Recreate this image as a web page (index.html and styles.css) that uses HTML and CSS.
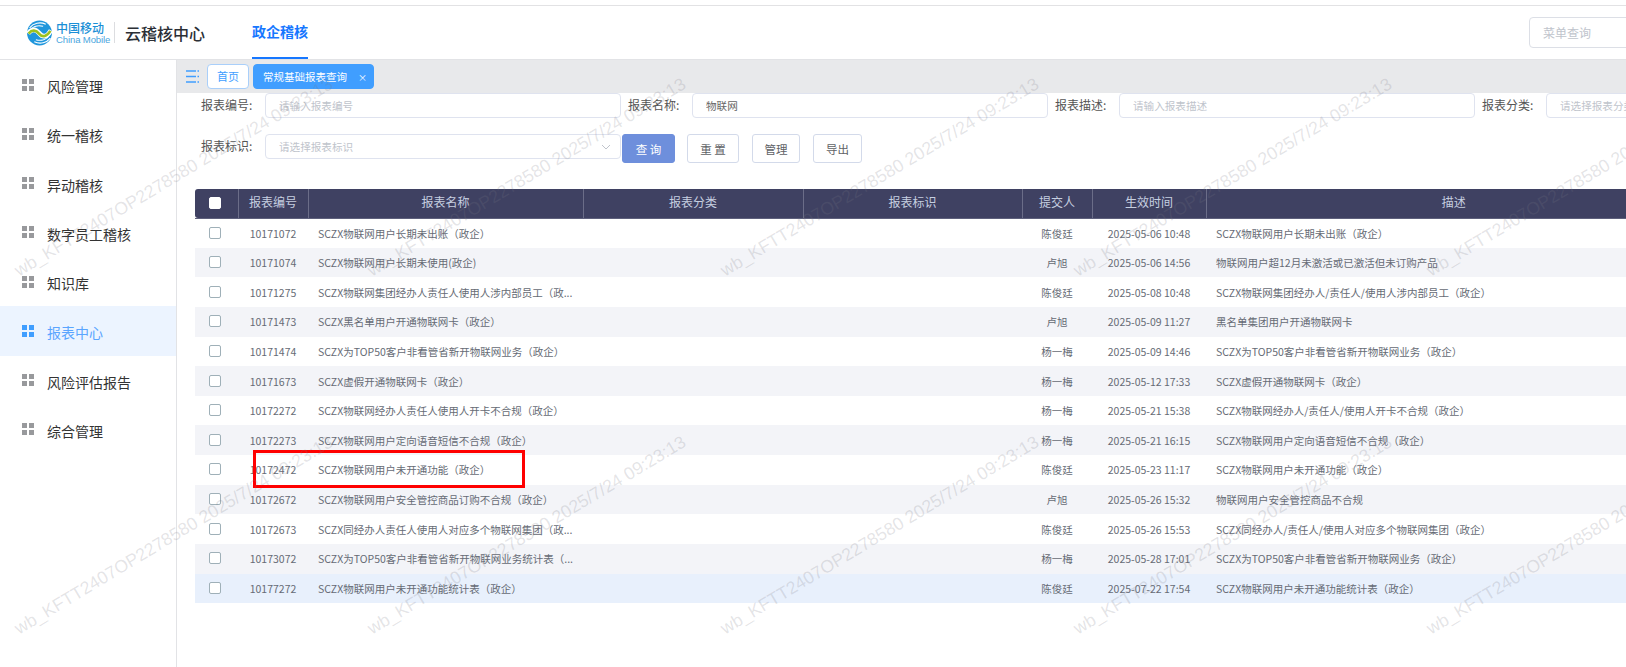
FILE: index.html
```html
<!DOCTYPE html>
<html lang="zh-CN">

<head>
    <meta charset="UTF-8">
    <title>云稽核中心</title>
    <link rel="stylesheet" href="styles.css">
</head>

<body>

    <div class="topline"></div>

    <header class="header">
        <div class="logo">
            <svg class="logo-mark" viewBox="0 0 48 50">
                <circle cx="24" cy="25" r="24" fill="#1e96dc" />
                <path d="M5 15C12 6 25 3 36 8M3 23C9 13 20 9 31 12M45 35C38 44 25 47 14 42M45 27C39 37 28 41 17 38" fill="none" stroke="#fff" stroke-width="2.200" />
                <path d="M2 26C9 16 17 17 24 26C30 34 38 33 46 20" fill="none" stroke="#fff" stroke-width="9" />
                <path d="M3 26C10 18 17 19 24 27C30 34 38 32 45 21" fill="none" stroke="#9cc21f" stroke-width="5" />
            </svg>
            <div class="logo-text">
                <div class="logo-cn">中国移动</div>
                <div class="logo-en">China Mobile</div>
            </div>
        </div>
        <div class="app-name">云稽核中心</div>
        <a class="nav-item">政企稽核</a>
        <input class="menu-search" type="text" placeholder="菜单查询">
    </header>

    <div class="layout">
        <aside class="sidebar">
            <div class="menu-item"><i class="grid-icon"><b></b><b></b><b></b><b></b></i><span>风险管理</span></div>
            <div class="menu-item"><i class="grid-icon"><b></b><b></b><b></b><b></b></i><span>统一稽核</span></div>
            <div class="menu-item"><i class="grid-icon"><b></b><b></b><b></b><b></b></i><span>异动稽核</span></div>
            <div class="menu-item"><i class="grid-icon"><b></b><b></b><b></b><b></b></i><span>数字员工稽核</span></div>
            <div class="menu-item"><i class="grid-icon"><b></b><b></b><b></b><b></b></i><span>知识库</span></div>
            <div class="menu-item active"><i class="grid-icon"><b></b><b></b><b></b><b></b></i><span>报表中心</span></div>
            <div class="menu-item"><i class="grid-icon"><b></b><b></b><b></b><b></b></i><span>风险评估报告</span></div>
            <div class="menu-item"><i class="grid-icon"><b></b><b></b><b></b><b></b></i><span>综合管理</span></div>
        </aside>

        <main class="main">
            <div class="tabs">
                <svg class="tabs-toggle" viewBox="0 0 13 13">
                    <path d="M0 1H10M0 6.500H10M0 12H10M11.500 1H13M11.500 6.500H13M11.500 12H13" fill="none" stroke="#409eff" stroke-width="1.300" />
                </svg>
                <div class="tab">首页</div>
                <div class="tab current">常规基础报表查询<span class="tab-close">×</span></div>
            </div>

            <div class="filters">
                <div class="filter-row">
                    <label class="field"><span>报表编号:</span><input type="text" placeholder="请输入报表编号"></label>
                    <label class="field"><span>报表名称:</span><input type="text" value="物联网"></label>
                    <label class="field"><span>报表描述:</span><input type="text" placeholder="请输入报表描述"></label>
                    <label class="field"><span>报表分类:</span><input type="text" placeholder="请选择报表分类"></label>
                </div>
                <div class="filter-row second">
                    <label class="field select">
                        <span>报表标识:</span><input type="text" placeholder="请选择报表标识">
                        <svg class="chevron" viewBox="0 0 10 6">
                            <path d="M1 1L5 5L9 1" fill="none" stroke="#c0c4cc" />
                        </svg>
                    </label>
                    <button class="btn primary">查 询</button>
                    <button class="btn reset">重 置</button>
                    <button class="btn manage">管理</button>
                    <button class="btn export">导出</button>
                </div>
            </div>

            <table class="report-table">
                <colgroup>
                    <col class="c-check">
                    <col class="c-id">
                    <col class="c-name">
                    <col class="c-type">
                    <col class="c-tag">
                    <col class="c-user">
                    <col class="c-time">
                    <col class="c-desc">
                </colgroup>
                <thead>
                    <tr>
                        <th class="check"><input type="checkbox"></th>
                        <th>报表编号</th>
                        <th>报表名称</th>
                        <th>报表分类</th>
                        <th>报表标识</th>
                        <th>提交人</th>
                        <th>生效时间</th>
                        <th>描述</th>
                    </tr>
                </thead>
                <tbody>
                    <tr><td class="check"><input type="checkbox"></td><td class="center">10171072</td><td class="name">SCZX物联网用户长期未出账（政企）</td><td></td><td></td><td class="center">陈俊廷</td><td class="center">2025-05-06 10:48</td><td class="desc">SCZX物联网用户长期未出账（政企）</td></tr>
                    <tr><td class="check"><input type="checkbox"></td><td class="center">10171074</td><td class="name">SCZX物联网用户长期未使用(政企)</td><td></td><td></td><td class="center">卢旭</td><td class="center">2025-05-06 14:56</td><td class="desc">物联网用户超12月未激活或已激活但未订购产品</td></tr>
                    <tr><td class="check"><input type="checkbox"></td><td class="center">10171275</td><td class="name">SCZX物联网集团经办人责任人使用人涉内部员工（政...</td><td></td><td></td><td class="center">陈俊廷</td><td class="center">2025-05-08 10:48</td><td class="desc">SCZX物联网集团经办人/责任人/使用人涉内部员工（政企）</td></tr>
                    <tr><td class="check"><input type="checkbox"></td><td class="center">10171473</td><td class="name">SCZX黑名单用户开通物联网卡（政企）</td><td></td><td></td><td class="center">卢旭</td><td class="center">2025-05-09 11:27</td><td class="desc">黑名单集团用户开通物联网卡</td></tr>
                    <tr><td class="check"><input type="checkbox"></td><td class="center">10171474</td><td class="name">SCZX为TOP50客户非看管省新开物联网业务（政企）</td><td></td><td></td><td class="center">杨一梅</td><td class="center">2025-05-09 14:46</td><td class="desc">SCZX为TOP50客户非看管省新开物联网业务（政企）</td></tr>
                    <tr><td class="check"><input type="checkbox"></td><td class="center">10171673</td><td class="name">SCZX虚假开通物联网卡（政企）</td><td></td><td></td><td class="center">杨一梅</td><td class="center">2025-05-12 17:33</td><td class="desc">SCZX虚假开通物联网卡（政企）</td></tr>
                    <tr><td class="check"><input type="checkbox"></td><td class="center">10172272</td><td class="name">SCZX物联网经办人责任人使用人开卡不合规（政企）</td><td></td><td></td><td class="center">杨一梅</td><td class="center">2025-05-21 15:38</td><td class="desc">SCZX物联网经办人/责任人/使用人开卡不合规（政企）</td></tr>
                    <tr><td class="check"><input type="checkbox"></td><td class="center">10172273</td><td class="name">SCZX物联网用户定向语音短信不合规（政企）</td><td></td><td></td><td class="center">杨一梅</td><td class="center">2025-05-21 16:15</td><td class="desc">SCZX物联网用户定向语音短信不合规（政企）</td></tr>
                    <tr><td class="check"><input type="checkbox"></td><td class="center">10172472</td><td class="name">SCZX物联网用户未开通功能（政企）</td><td></td><td></td><td class="center">陈俊廷</td><td class="center">2025-05-23 11:17</td><td class="desc">SCZX物联网用户未开通功能（政企）</td></tr>
                    <tr><td class="check"><input type="checkbox"></td><td class="center">10172672</td><td class="name">SCZX物联网用户安全管控商品订购不合规（政企）</td><td></td><td></td><td class="center">卢旭</td><td class="center">2025-05-26 15:32</td><td class="desc">物联网用户安全管控商品不合规</td></tr>
                    <tr><td class="check"><input type="checkbox"></td><td class="center">10172673</td><td class="name">SCZX同经办人责任人使用人对应多个物联网集团（政...</td><td></td><td></td><td class="center">陈俊廷</td><td class="center">2025-05-26 15:53</td><td class="desc">SCZX同经办人/责任人/使用人对应多个物联网集团（政企）</td></tr>
                    <tr><td class="check"><input type="checkbox"></td><td class="center">10173072</td><td class="name">SCZX为TOP50客户非看管省新开物联网业务统计表（...</td><td></td><td></td><td class="center">杨一梅</td><td class="center">2025-05-28 17:01</td><td class="desc">SCZX为TOP50客户非看管省新开物联网业务（政企）</td></tr>
                    <tr class="hover"><td class="check"><input type="checkbox"></td><td class="center">10177272</td><td class="name">SCZX物联网用户未开通功能统计表（政企）</td><td></td><td></td><td class="center">陈俊廷</td><td class="center">2025-07-22 17:54</td><td class="desc">SCZX物联网用户未开通功能统计表（政企）</td></tr>
                </tbody>
            </table>
        </main>
    </div>

    <div class="red-box"></div>

    <div class="watermark">
        <span>wb_KFTT2407OP2278580 2025/7/24 09:23:13</span>
        <span>wb_KFTT2407OP2278580 2025/7/24 09:23:13</span>
        <span>wb_KFTT2407OP2278580 2025/7/24 09:23:13</span>
        <span>wb_KFTT2407OP2278580 2025/7/24 09:23:13</span>
        <span>wb_KFTT2407OP2278580 2025/7/24 09:23:13</span>
        <span>wb_KFTT2407OP2278580 2025/7/24 09:23:13</span>
        <span>wb_KFTT2407OP2278580 2025/7/24 09:23:13</span>
        <span>wb_KFTT2407OP2278580 2025/7/24 09:23:13</span>
        <span>wb_KFTT2407OP2278580 2025/7/24 09:23:13</span>
        <span>wb_KFTT2407OP2278580 2025/7/24 09:23:13</span>
    </div>

</body>

</html>
```

FILE: styles.css
```css
* {
    box-sizing: border-box;
}

html,
body {
    height: 100%;
}

body {
    position: relative;
    margin: 0;
    overflow: hidden;
    background: #fff;
    color: #606266;
    font-family: "Noto Sans CJK SC", "Liberation Sans", sans-serif;
}

.topline {
    height: 6px;
    border-bottom: 1px solid #e2e2e4;
}

.header {
    display: flex;
    align-items: center;
    height: 54px;
    padding-left: 27px;
    border-bottom: 1px solid #e2e3e6;
}

.logo {
    display: flex;
    align-items: center;
    width: 88px;
    height: 21px;
    border-right: 1px solid #dcdde0;
}

.logo-mark {
    flex: none;
    width: 25px;
    height: 26px;
    margin-right: 4px;
}

.logo-text {
    color: #1b8fd6;
    white-space: nowrap;
}

.logo-cn {
    font-size: 12px;
    font-weight: 500;
    line-height: 13px;
}

.logo-en {
    color: #4aa6de;
    font-family: "Liberation Sans", sans-serif;
    font-size: 9.500px;
    line-height: 11px;
    letter-spacing: -0.100px;
}

.app-name {
    width: 137px;
    padding-left: 10px;
    color: #2b2f36;
    font-size: 16px;
    font-weight: 500;
}

.nav-item {
    display: flex;
    align-items: center;
    width: 56px;
    height: 53px;
    padding-bottom: 2px;
    border-bottom: 2px solid #1677ff;
    color: #1677ff;
    font-size: 14px;
    font-weight: 700;
    white-space: nowrap;
}

.menu-search {
    width: 140px;
    height: 31px;
    margin-left: auto;
    margin-right: -43px;
    padding: 0 13px;
    border: 1px solid #dcdfe6;
    border-radius: 4px;
    font: inherit;
    font-size: 12px;
}

input::placeholder {
    color: #c0c4cc;
    opacity: 1;
}

.layout {
    display: flex;
    height: 607px;
}

.sidebar {
    flex: none;
    width: 177px;
    border-right: 1px solid #e2e3e6;
}

.menu-item {
    display: flex;
    align-items: center;
    height: 49.250px;
    padding-left: 22px;
    color: #333;
    font-size: 14px;
}

.menu-item span {
    margin-left: 13px;
    padding-top: 3px;
}

.menu-item.active {
    background: #ecf4ff;
    color: #5aa5ff;
}

.grid-icon {
    display: grid;
    grid-template-columns: 5px 5px;
    gap: 2px;
}

.grid-icon b {
    height: 5px;
    background: #98999c;
}

.active .grid-icon b {
    background: #409eff;
}

.main {
    flex: 1;
    min-width: 0;
    overflow: hidden;
}

.tabs {
    display: flex;
    align-items: center;
    height: 33px;
    padding: 0 0 0 9px;
    background: #e8e9eb;
}

.tabs-toggle {
    width: 13px;
    height: 13px;
    margin-right: 8px;
}

.tab {
    height: 25px;
    margin-right: 4px;
    padding: 0 9px;
    border: 1px solid #a9cffa;
    border-radius: 4px;
    background: #fff;
    color: #409eff;
    font-size: 11px;
    line-height: 23px;
}

.tab.current {
    width: 121px;
    padding-right: 0;
    border-color: #409eff;
    background: #409eff;
    color: #fff;
    font-size: 10.500px;
    white-space: nowrap;
}

.tab-close {
    margin-left: 11px;
    font-size: 9px;
}

.filters {
    padding-left: 24px;
}

.filter-row {
    display: flex;
    align-items: flex-start;
    white-space: nowrap;
}

.filter-row.second {
    margin-top: 16px;
}

.field {
    position: relative;
    display: flex;
    flex: none;
    align-items: center;
    margin-right: 7px;
    font-size: 12px;
}

.field span {
    width: 64px;
    padding-bottom: 3px;
    color: #555;
}

.field input {
    width: 356px;
    height: 25px;
    padding: 0 13px;
    border: 1px solid #dfe3ef;
    border-radius: 4px;
    color: #666;
    font: inherit;
    font-size: 10.600px;
}

.field.select {
    margin-right: 1px;
}

.chevron {
    position: absolute;
    right: 10px;
    top: 10px;
    width: 10px;
    height: 6px;
}

.btn {
    height: 29px;
    margin-right: 13px;
    padding: 0;
    border: 1px solid #d3daea;
    border-radius: 3px;
    background: #fff;
    color: #606266;
    font: inherit;
    font-size: 11.500px;
}

.btn.primary {
    width: 53px;
    margin-right: 12px;
    border-color: #6e8fdc;
    background: #6e8fdc;
    color: #fff;
}

.btn.reset {
    width: 52px;
}

.btn.manage {
    width: 48px;
}

.btn.export {
    width: 49px;
}

.report-table {
    width: 1506px;
    margin: 26px 0 0 18px;
    border-collapse: collapse;
    table-layout: fixed;
    font-size: 10.500px;
}

.c-check {
    width: 43px;
}

.c-id {
    width: 70px;
}

.c-name {
    width: 275px;
}

.c-type {
    width: 220px;
}

.c-tag {
    width: 219px;
}

.c-user {
    width: 70px;
}

.c-time {
    width: 114px;
}

.c-desc {
    width: 495px;
}

th {
    height: 29px;
    padding: 0 0 3px;
    border-right: 1px solid #6b6d88;
    border-bottom: 1px solid #5e607c;
    background: #3f4162;
    color: #c6cfe0;
    font-size: 12px;
    font-weight: 400;
    text-align: center;
}

th:first-child {
    border-radius: 3px 0 0 3px;
}

th:last-child {
    border-right: none;
}

td {
    height: 29.650px;
    padding: 0 10px;
    overflow: hidden;
    color: #666b75;
    white-space: nowrap;
}

tbody tr:nth-child(even) td {
    background: #f3f4f8;
}

tbody tr.hover td {
    background: #e8f0fc;
}

.center {
    padding: 0;
    text-align: center;
}

th.check,
td.check {
    padding: 0 0 0 14px;
    text-align: left;
}

.check input {
    display: block;
    width: 12px;
    height: 12px;
    margin: 0 0 1px;
    border: 1px solid #9fb0b8;
    border-radius: 2px;
    background: #fff;
    appearance: none;
}

th.check input {
    border-color: #fff;
}

.red-box {
    position: absolute;
    left: 253px;
    top: 450px;
    width: 272px;
    height: 38px;
    border: 3px solid #f00;
}

.watermark {
    position: absolute;
    left: -3px;
    top: -2px;
    display: grid;
    grid-template-columns: repeat(5, 353px);
    grid-auto-rows: 358px;
    pointer-events: none;
}

.watermark span {
    display: flex;
    align-items: center;
    justify-content: center;
    color: rgba(120, 120, 130, 0.2);
    font-family: "Liberation Sans", sans-serif;
    font-size: 17.700px;
    white-space: nowrap;
    transform: rotate(-31deg);
}
```
